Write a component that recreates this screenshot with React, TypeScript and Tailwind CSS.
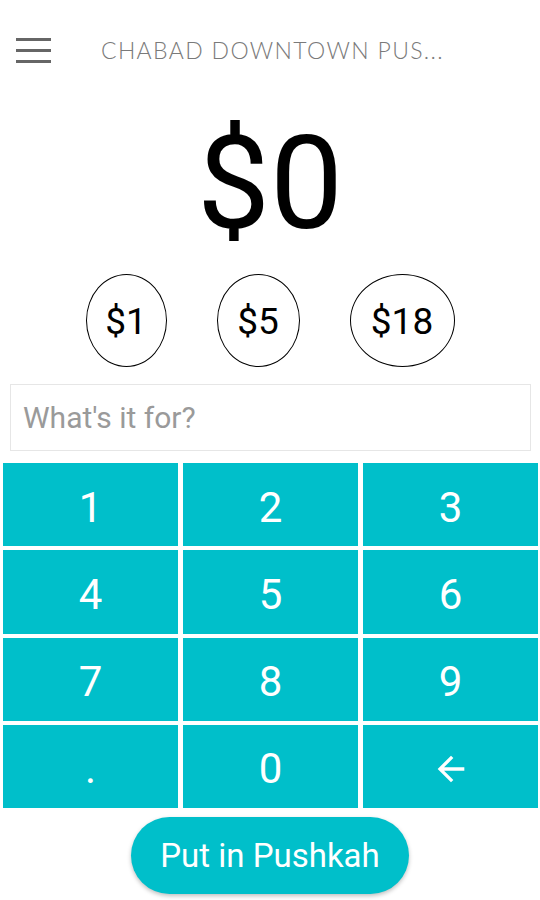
import React from 'react';

const keys = ['1', '2', '3', '4', '5', '6', '7', '8', '9', '.', '0', 'back'];

const quickAmounts = [
    { label: '$1', width: 'w-[81px]' },
    { label: '$5', width: 'w-[83px]' },
    { label: '$18', width: 'w-[105px]' },
];

const BackArrow: React.FC = () => (
    <svg width="40" height="40" viewBox="0 0 24 24" fill="#ffffff">
        <path d="M20 11H7.83l5.59-5.59L12 4l-8 8 8 8 1.41-1.41L7.83 13H20v-2z" />
    </svg>
);

const App: React.FC = () => {
    return (
        <div className="w-[540px] h-[900px] bg-white overflow-hidden font-['Roboto','Liberation_Sans',sans-serif]">
            {/* header */}
            <div className="h-[100px] flex items-center">
                <button className="ml-[16px] w-[35px] flex flex-col gap-[8px]">
                    <span className="block h-[3px] w-full bg-[#666666]" />
                    <span className="block h-[3px] w-full bg-[#666666]" />
                    <span className="block h-[3px] w-full bg-[#666666]" />
                </button>
                <h1 className="ml-[50px] text-[23px] font-light tracking-[1.35px] text-[#7a7a7a] font-['Lato','Open_Sans',sans-serif] whitespace-nowrap">
                    CHABAD DOWNTOWN PUS...
                </h1>
            </div>

            {/* amount */}
            <div className="mt-[19px] text-center text-[130px] leading-[130px] text-black">$0</div>

            {/* quick amounts */}
            <div className="mt-[25px] flex justify-center gap-[50px]">
                {quickAmounts.map((q) => (
                    <button
                        key={q.label}
                        className={`${q.width} h-[93px] rounded-[50%] border border-black text-[37px] text-black flex items-center justify-center pt-[2px]`}
                    >
                        {q.label}
                    </button>
                ))}
            </div>

            {/* note */}
            <div className="mt-[17px] ml-[10px] mr-[9px] h-[67px] border border-[#e6e6e6] flex items-center px-[12px]">
                <input
                    className="w-full outline-none text-[30px] text-black placeholder:text-[#9a9a9a] bg-transparent"
                    placeholder="What's it for?"
                />
            </div>

            {/* keypad */}
            <div className="mt-[12px] ml-[3px] mr-[2px] h-[345px] grid grid-cols-3 grid-rows-4 gap-[4px] gap-x-[5px]">
                {keys.map((k) => (
                    <button
                        key={k}
                        className="bg-[#00bfca] text-white text-[42px] flex items-center justify-center pt-[5px]"
                    >
                        {k === 'back' ? <BackArrow /> : k}
                    </button>
                ))}
            </div>

            {/* submit */}
            <div className="mt-[9px] flex justify-center">
                <button className="w-[278px] h-[77px] rounded-full bg-[#00bfca] text-white text-[33px] shadow-[0_2px_4px_rgba(0,0,0,0.25)]">
                    Put in Pushkah
                </button>
            </div>
        </div>
    );
};

export default App;
